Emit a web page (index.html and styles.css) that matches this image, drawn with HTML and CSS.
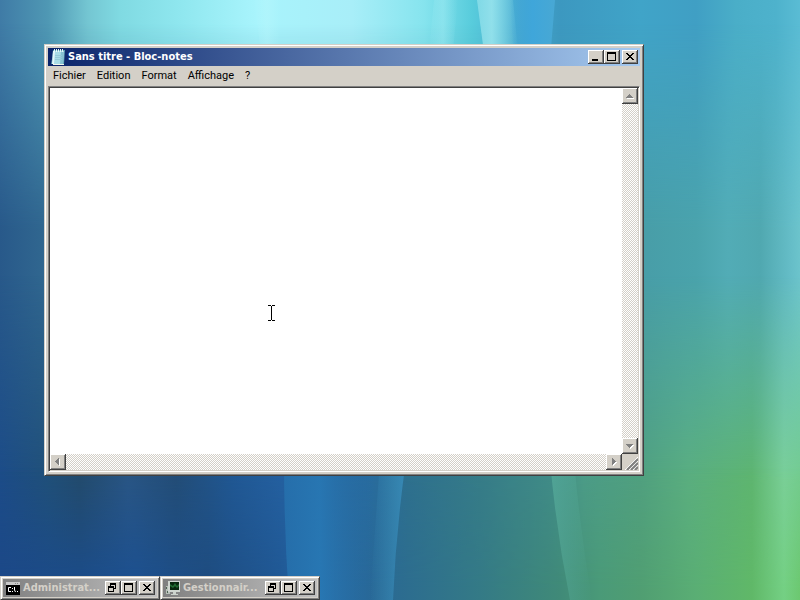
FILE: index.html
```html
<!DOCTYPE html>
<html lang="fr">
<head>
<meta charset="utf-8">
<title>Sans titre - Bloc-notes</title>
<link rel="stylesheet" href="styles.css">
</head>
<body>
<main class="desktop">
  <div class="wallpaper" aria-hidden="true">
    <div class="band band-top"></div>
    <div class="band band-upper"></div>
    <div class="band band-lower"></div>
    <div class="band band-bottom"></div>
    <svg class="streaks" viewBox="0 0 800 600" preserveAspectRatio="none">
      <defs>
        <linearGradient id="g1"><stop offset="0" stop-color="#9ce6ee" stop-opacity=".6"/><stop offset=".35" stop-color="#9ce6ee" stop-opacity=".85"/><stop offset="1" stop-color="#9ce6ee" stop-opacity="0"/></linearGradient>
        <linearGradient id="g2"><stop offset="0" stop-color="#3fa6da" stop-opacity="0"/><stop offset=".5" stop-color="#3fa6da"/><stop offset="1" stop-color="#48a8d4"/></linearGradient>
        <linearGradient id="g3"><stop offset="0" stop-color="#2672ae" stop-opacity=".8"/><stop offset=".4" stop-color="#287ab6" stop-opacity=".8"/><stop offset="1" stop-color="#286ca0" stop-opacity="0"/></linearGradient>
        <linearGradient id="g4"><stop offset="0" stop-color="#3a90c0" stop-opacity="0"/><stop offset="1" stop-color="#3a90c0" stop-opacity=".8"/></linearGradient>
        <linearGradient id="g5"><stop offset="0" stop-color="#5cb4a0" stop-opacity=".6"/><stop offset="1" stop-color="#5cb4a0" stop-opacity="0"/></linearGradient>
        <linearGradient id="g6"><stop offset="0" stop-color="#c0f8fc" stop-opacity="0"/><stop offset=".5" stop-color="#c0f8fc" stop-opacity=".3"/><stop offset="1" stop-color="#c0f8fc" stop-opacity="0"/></linearGradient>
      </defs>
      <path fill="url(#g6)" d="M254 0h26v60h-18z"/>
      <path fill="url(#g6)" d="M434 0h24l-6 60h-24z"/>
      <path fill="url(#g1)" d="M477 0h36l6 60h-34z"/>
      <path fill="url(#g2)" d="M510 0h45l-5 60h-36z"/>
      <path fill="url(#g3)" d="M284 460h90v140h-85q-5-70-5-140z"/>
      <path fill="url(#g4)" d="M380 460h26q-10 70-13 140h-23z"/>
      <path fill="url(#g5)" d="M550 460h24q6 70 18 140h-22q-14-70-20-140z"/>
    </svg>
  </div>

  <section class="window notepad" aria-label="Sans titre - Bloc-notes">
    <header class="titlebar">
      <svg class="icon" viewBox="0 0 16 16" aria-hidden="true">
        <path fill="#5d9fb2" d="M3 1h12l-1 14H1l1-5z"/>
        <path fill="#a8dce6" d="M4 2h10l-1 13H3z"/>
        <path fill="#86c3d2" d="M11 3h3l-1 12h-3z"/>
        <path fill="#e4f7fa" d="M3 2h2L4 15H2z"/>
        <path fill="none" stroke="#e8f8fa" d="M4.500 0v3M6.500 0v3M8.500 0v3M10.500 0v3M12.500 0v3"/>
        <path fill="none" stroke="#94cad8" d="M5 6.500h7M5 8.500h7M5 10.500h7"/>
        <path fill="#f2f7ec" d="M3 15h11v1H3z"/>
      </svg>
      <h1 class="title">Sans titre - Bloc-notes</h1>
      <div class="controls">
        <button class="btn" type="button" aria-label="Réduire"><svg viewBox="0 0 16 14"><path d="M4 9h6v2H4z"/></svg></button>
        <button class="btn" type="button" aria-label="Agrandir"><svg viewBox="0 0 16 14"><path fill-rule="evenodd" d="M3 2h9v9H3zM4 4v6h7V4z"/></svg></button>
        <button class="btn close" type="button" aria-label="Fermer"><svg viewBox="0 0 16 14"><path d="M4 3h2v1h1v1h2V4h1V3h2v1h-1v1h-1v1H9v1h1v1h1v1h1v1h-2V9H9V8H7v1H6v1H4V9h1V8h1V7h1V6H6V5H5V4H4z"/></svg></button>
      </div>
    </header>
    <nav class="menubar" aria-label="Menu">
      <button type="button">Fichier</button>
      <button type="button">Edition</button>
      <button type="button">Format</button>
      <button type="button">Affichage</button>
      <button type="button">?</button>
    </nav>
    <div class="editor">
      <textarea aria-label="Texte du document" spellcheck="false"></textarea>
      <div class="scroll vertical">
        <button class="btn arrow" type="button" aria-label="Défiler vers le haut" disabled><svg viewBox="0 0 16 16"><path class="lit" d="M8 7h1v1h1v1h1v1h1v1H5v-1h1z"/><path class="dim" d="M7 6h1v1h1v1h1v1h1v1H4V9h1V8h1V7h1z"/></svg></button>
        <button class="btn arrow" type="button" aria-label="Défiler vers le bas" disabled><svg viewBox="0 0 16 16"><path class="lit" d="M5 7h7v1h-1v1h-1v1H9v1H8v-1H7V9H6V8H5z"/><path class="dim" d="M4 6h7v1h-1v1H9v1H8v1H7V9H6V8H5V7H4z"/></svg></button>
      </div>
      <div class="scroll horizontal">
        <button class="btn arrow" type="button" aria-label="Défiler vers la gauche" disabled><svg viewBox="0 0 16 16"><path class="lit" d="M9 5h1v7H9v-1H8v-1H7V9H6V8h1V7h1V6h1z"/><path class="dim" d="M8 4h1v7H8v-1H7V9H6V8H5V7h1V6h1V5h1z"/></svg></button>
        <button class="btn arrow" type="button" aria-label="Défiler vers la droite" disabled><svg viewBox="0 0 16 16"><path class="lit" d="M7 5h1v1h1v1h1v1h1v1h-1v1H9v1H8v1H7z"/><path class="dim" d="M6 4h1v1h1v1h1v1h1v1H9v1H8v1H7v1H6z"/></svg></button>
      </div>
      <svg class="grip" viewBox="0 0 16 16" aria-hidden="true">
        <path stroke="#fff" d="M3 16 16 3M7 16 16 7M11 16l5-5"/>
        <path stroke="#808080" stroke-width="2" d="M5 16 16 5M9 16l7-7M13 16l3-3"/>
      </svg>
    </div>
  </section>

  <div class="minimized">
    <section class="window mini" aria-label="Administrateur">
      <header class="titlebar">
        <svg class="icon" viewBox="0 0 16 16" aria-hidden="true">
          <path fill="#c8c8c8" d="M1 2h14v3H1z"/>
          <path fill="#888" d="M10 3h1v1h-1zM12 3h1v1h-1z"/>
          <path fill="#000" d="M1 5h14v10H1z"/>
          <path fill="none" stroke="#fff" d="M6 7.500H3.500v4H6M7.500 8v1M7.500 11v1M9.500 7v3l1 2M12 11.500h1"/>
        </svg>
        <h2 class="title">Administrat...</h2>
        <div class="controls">
          <button class="btn" type="button" aria-label="Restaurer"><svg viewBox="0 0 16 14"><path fill-rule="evenodd" d="M5 2h6v6H9v3H3V5h2zM6 4v1h3v2h1V4zM4 7v3h4V7z"/></svg></button>
          <button class="btn" type="button" aria-label="Agrandir"><svg viewBox="0 0 16 14"><path fill-rule="evenodd" d="M3 2h9v9H3zM4 4v6h7V4z"/></svg></button>
          <button class="btn close" type="button" aria-label="Fermer"><svg viewBox="0 0 16 14"><path d="M4 3h2v1h1v1h2V4h1V3h2v1h-1v1h-1v1H9v1h1v1h1v1h1v1h-2V9H9V8H7v1H6v1H4V9h1V8h1V7h1V6H6V5H5V4H4z"/></svg></button>
        </div>
      </header>
    </section>
    <section class="window mini" aria-label="Gestionnaire">
      <header class="titlebar">
        <svg class="icon" viewBox="0 0 16 16" aria-hidden="true">
          <path fill="#b8c0b8" d="M1 6h4v8H1z"/>
          <path fill="#4e6454" d="M1 7h1v2H1zM2 11h1v2H2z"/>
          <path fill="#d0d6d0" d="M3 1h12v11H3z"/>
          <path fill="#06250c" d="M5 2h9v8H5z"/>
          <path fill="#1f6a30" d="M5 4l3 2 2-3 2 3 2-2v2l-2 2-2-2-2 2-3-2z"/>
          <path fill="#ccd2cc" d="M8 12h3v2h2v1H6v-1h2z"/>
        </svg>
        <h2 class="title">Gestionnair...</h2>
        <div class="controls">
          <button class="btn" type="button" aria-label="Restaurer"><svg viewBox="0 0 16 14"><path fill-rule="evenodd" d="M5 2h6v6H9v3H3V5h2zM6 4v1h3v2h1V4zM4 7v3h4V7z"/></svg></button>
          <button class="btn" type="button" aria-label="Agrandir"><svg viewBox="0 0 16 14"><path fill-rule="evenodd" d="M3 2h9v9H3zM4 4v6h7V4z"/></svg></button>
          <button class="btn close" type="button" aria-label="Fermer"><svg viewBox="0 0 16 14"><path d="M4 3h2v1h1v1h2V4h1V3h2v1h-1v1h-1v1H9v1h1v1h1v1h1v1h-2V9H9V8H7v1H6v1H4V9h1V8h1V7h1V6H6V5H5V4H4z"/></svg></button>
        </div>
      </header>
    </section>
  </div>

  <svg class="pointer" viewBox="0 0 8 16" aria-hidden="true"><path d="M0 0h3v1h1V0h3v1H4v14h3v1H4v-1H3v1H0v-1h3V1H0z"/></svg>
</main>
</body>
</html>
```
FILE: styles.css
```css
* { box-sizing: border-box; }

body {
  margin: 0;
  font: 11px/14px "DejaVu Sans Condensed", "DejaVu Sans", sans-serif;
  color: #000;
}

svg { display: block; }

.desktop {
  position: relative;
  min-height: 100vh;
  overflow: hidden;
}

.wallpaper, .band, .streaks {
  position: absolute;
  inset: 0;
  width: 100%;
  height: 100%;
}

.band-top {
  background: linear-gradient(90deg, #3f7ba6 0%, #4f98b4 6%, #74c6d2 11%, #80dae2 15%, #8ee6ee 22%, #a8f4fc 32%, #a8eef8 44%, #86e4ee 53%, #58ccdc 59%, #46a8d0 65%, #3c98c0 70%, #40a4c8 80%, #409fc4 87%, #4aaec8 92%, #4eb2cc 97%, #5abcd4 100%);
}

.band-upper {
  background: linear-gradient(90deg, #28598a 0%, #316890 6%, #48a0b0 50%, #489ea8 81%, #4aa3ac 87%, #52acb6 91%, #50a8b0 95%, #66bec8 99%, #6cc4cc 100%);
  -webkit-mask-image: linear-gradient(transparent 4%, #000 38%);
  mask-image: linear-gradient(transparent 4%, #000 38%);
}

.band-lower {
  background: linear-gradient(90deg, #1c4c88 0%, #205078 6%, #234b6b 10%, #2a5684 16%, #234d76 22%, #205894 29%, #2460a0 35%, #286ca0 46%, #2e708e 51%, #367c88 60%, #408c88 69%, #4c9c88 73%, #50a080 80%, #5aae80 86%, #5eb570 94%, #7acf98 98%, #74cc90 100%);
  -webkit-mask-image: linear-gradient(transparent 46%, #000 80%);
  mask-image: linear-gradient(transparent 46%, #000 80%);
}

.band-bottom {
  background: linear-gradient(90deg, #1c4888 0%, #1b4c8a 10%, #1c5090 17%, #1e4c80 26%, #205894 35%, #266aa6 40%, #286898 46%, #2c6c90 50%, #347a86 60%, #408a78 70%, #4a9a78 75%, #509e72 80%, #5aae74 87%, #60b868 94%, #74d084 98%, #6cc870 100%);
  -webkit-mask-image: linear-gradient(transparent 78%, #000 98%);
  mask-image: linear-gradient(transparent 78%, #000 98%);
}

.window {
  display: flex;
  flex-direction: column;
  background: #d4d0c8;
  border: 1px solid;
  border-color: #d4d0c8 #404040 #404040 #d4d0c8;
  box-shadow: inset 1px 1px #fff, inset -1px -1px #808080;
}

.notepad {
  position: absolute;
  left: 44px;
  top: 44px;
  width: 75%;
  height: 72%;
  padding: 3px;
}

.titlebar {
  display: flex;
  align-items: center;
  height: 18px;
  padding: 0 2px;
  color: #fff;
  background: linear-gradient(90deg, #0a246a, #a6caf0);
}

.icon { width: 16px; height: 16px; flex: none; }

.title {
  flex: 1;
  min-width: 0;
  margin: 0;
  padding-left: 2px;
  font-size: 11px;
  line-height: 16px;
  font-weight: bold;
  white-space: nowrap;
  overflow: hidden;
}

.controls { display: flex; }

.btn {
  width: 16px;
  height: 14px;
  padding: 0;
  border: 0;
  background: #d4d0c8;
  box-shadow: inset -1px -1px #404040, inset 1px 1px #fff, inset -2px -2px #808080;
}

.btn svg { width: 100%; height: 100%; }

.close { margin-left: 2px; }

.menubar {
  display: flex;
  gap: 1px;
  height: 20px;
}

.menubar button {
  padding: 0 5px;
  border: 0;
  background: none;
  color: inherit;
  font: 11px/20px Roboto, sans-serif;
}

.editor {
  flex: 1;
  display: grid;
  grid-template: minmax(0, 1fr) 16px / minmax(0, 1fr) 16px;
  border: 1px solid;
  border-color: #808080 #fff #fff #808080;
  padding: 1px;
  box-shadow: inset 1px 1px #404040, inset -1px -1px #d4d0c8;
}

.editor textarea {
  width: 100%;
  height: 100%;
  margin: 0;
  padding: 2px;
  border: 0;
  outline: 0;
  resize: none;
  overflow: hidden;
  background: #fff;
  font: 13px/16px "Liberation Mono", monospace;
}

.scroll {
  display: flex;
  justify-content: space-between;
  background: conic-gradient(#d4d0c8 25%, #fff 0 50%, #d4d0c8 0 75%, #fff 0) 0 0 / 2px 2px;
}

.vertical { flex-direction: column; }

.arrow { height: 16px; }

.lit { fill: #fff; }
.dim { fill: #808080; }

.grip { width: 16px; height: 16px; }

.minimized {
  position: absolute;
  left: 0;
  bottom: 0;
  display: flex;
}

.mini {
  width: 160px;
  height: 24px;
  padding: 2px;
}

.mini .titlebar {
  color: #d4d0c8;
  background: linear-gradient(90deg, #808080, #c0c0c0);
}

.pointer {
  position: absolute;
  left: 268px;
  top: 305px;
  width: 8px;
  height: 16px;
}
```
